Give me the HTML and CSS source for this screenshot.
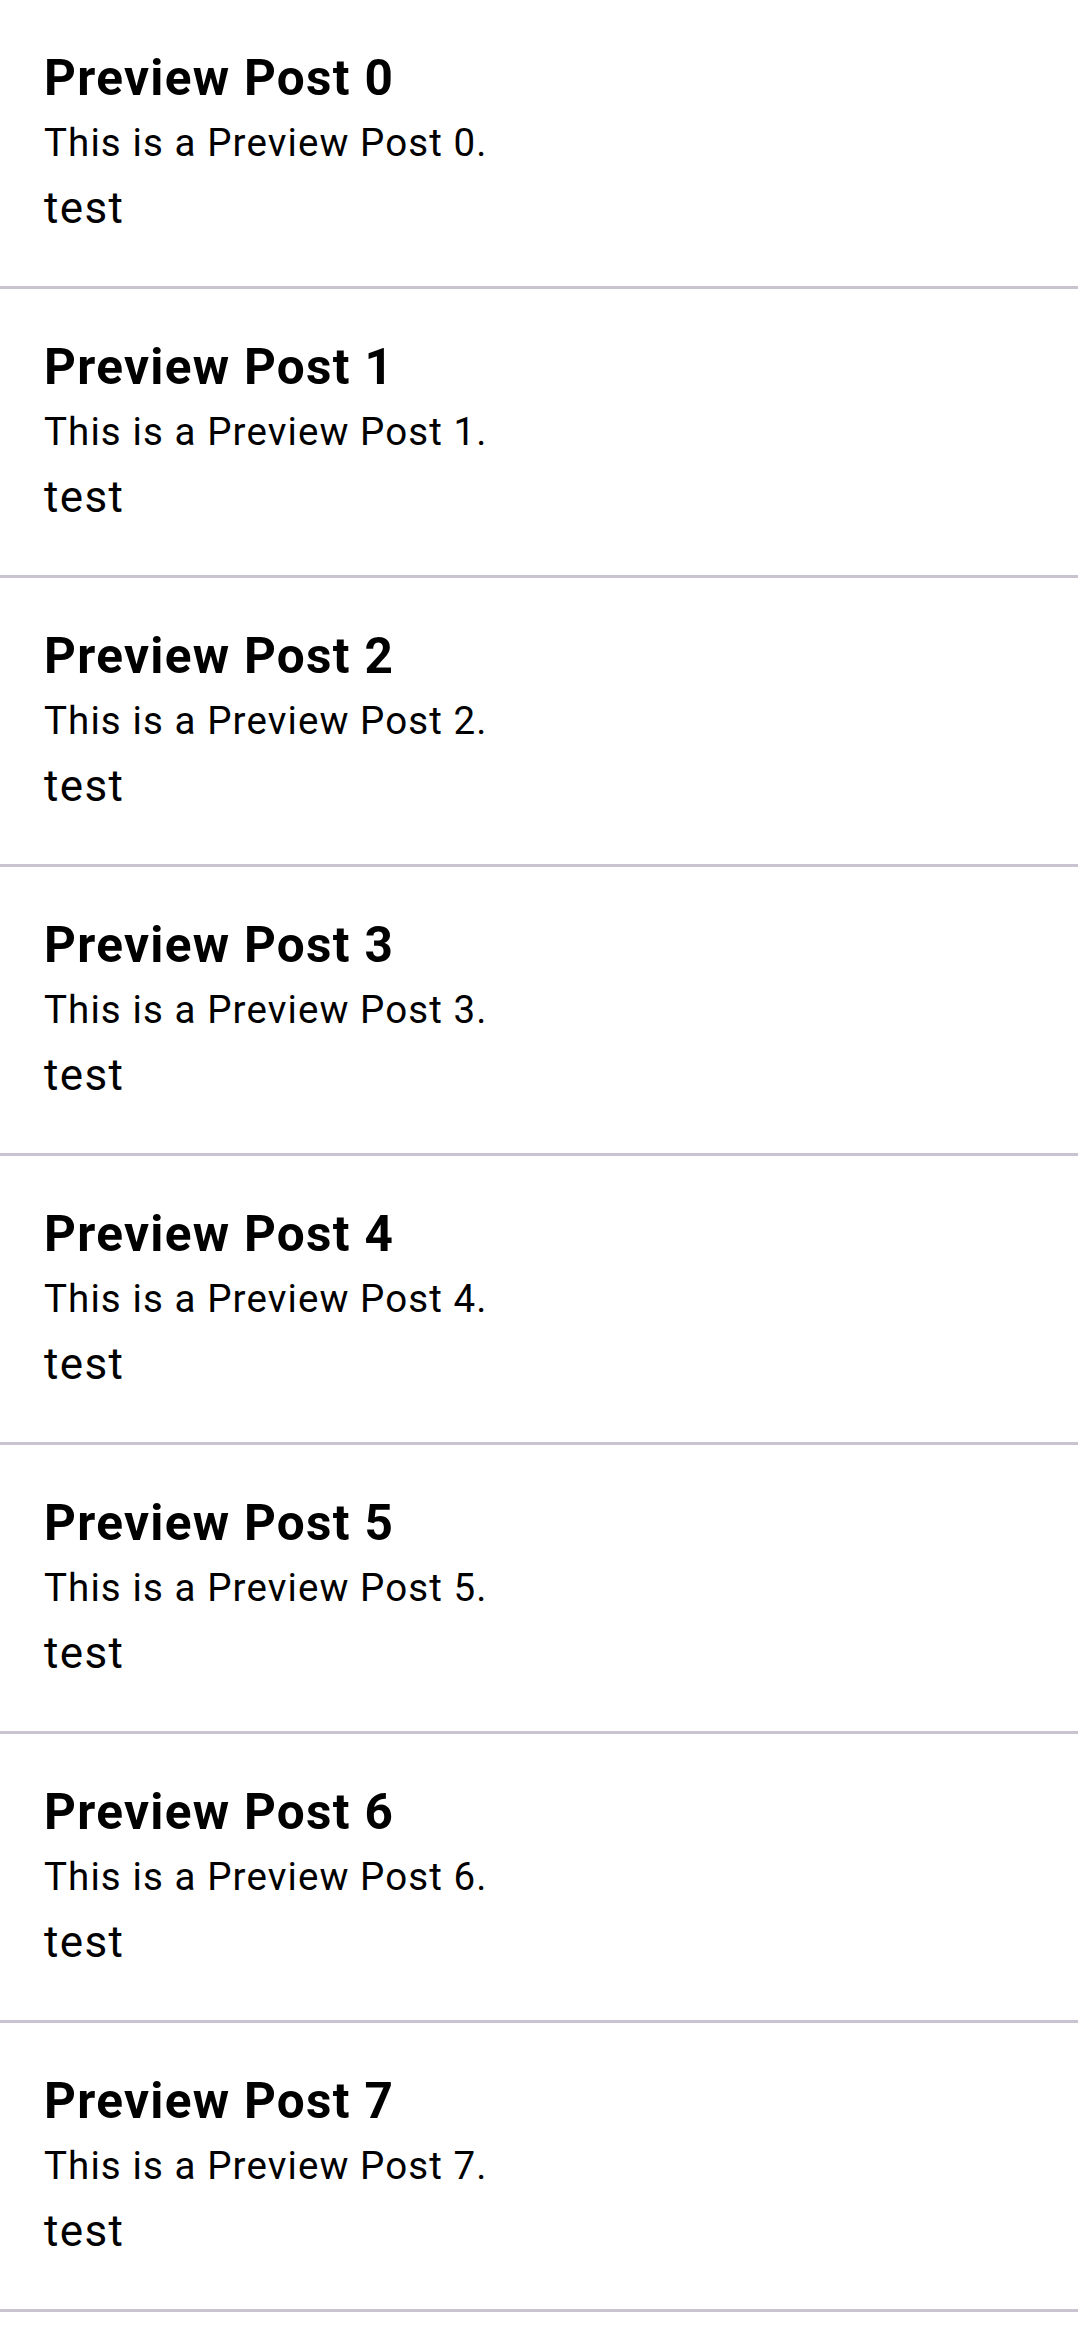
FILE: index.html
```html
<!DOCTYPE html>
<html lang="en">
<head>
<meta charset="utf-8">
<title>Preview Posts</title>
<link rel="stylesheet" href="styles.css">
</head>
<body>
<main class="list">
  <article class="post"><h2 class="post-title">Preview Post 0</h2><p class="post-body">This is a Preview Post 0.</p><p class="post-tag">test</p></article>
  <article class="post"><h2 class="post-title">Preview Post 1</h2><p class="post-body">This is a Preview Post 1.</p><p class="post-tag">test</p></article>
  <article class="post"><h2 class="post-title">Preview Post 2</h2><p class="post-body">This is a Preview Post 2.</p><p class="post-tag">test</p></article>
  <article class="post"><h2 class="post-title">Preview Post 3</h2><p class="post-body">This is a Preview Post 3.</p><p class="post-tag">test</p></article>
  <article class="post"><h2 class="post-title">Preview Post 4</h2><p class="post-body">This is a Preview Post 4.</p><p class="post-tag">test</p></article>
  <article class="post"><h2 class="post-title">Preview Post 5</h2><p class="post-body">This is a Preview Post 5.</p><p class="post-tag">test</p></article>
  <article class="post"><h2 class="post-title">Preview Post 6</h2><p class="post-body">This is a Preview Post 6.</p><p class="post-tag">test</p></article>
  <article class="post"><h2 class="post-title">Preview Post 7</h2><p class="post-body">This is a Preview Post 7.</p><p class="post-tag">test</p></article>
</main>
</body>
</html>
```

FILE: styles.css
```css
html, body {
  margin: 0;
  padding: 0;
  background: #ffffff;
}

body {
  font-family: Roboto, "Noto Sans", sans-serif;
  color: #000000;
}

.list {
  display: flex;
  flex-direction: column;
}

.post {
  display: flex;
  flex-direction: column;
  padding: 44px 44px 0 44px;
  box-sizing: content-box;
  height: 242px;
  border-bottom: 3px solid #cac4d0;
}

.post-title {
  margin: 0;
  font-size: 49.5px;
  font-weight: 700;
  letter-spacing: 1.3px;
  line-height: 68px;
}

.post-body {
  margin: 0;
  font-size: 38.5px;
  font-weight: 400;
  letter-spacing: 1.1px;
  line-height: 62px;
}

.post-tag {
  margin: 0;
  font-size: 44px;
  font-weight: 400;
  letter-spacing: 1.375px;
  line-height: 69px;
}
```
